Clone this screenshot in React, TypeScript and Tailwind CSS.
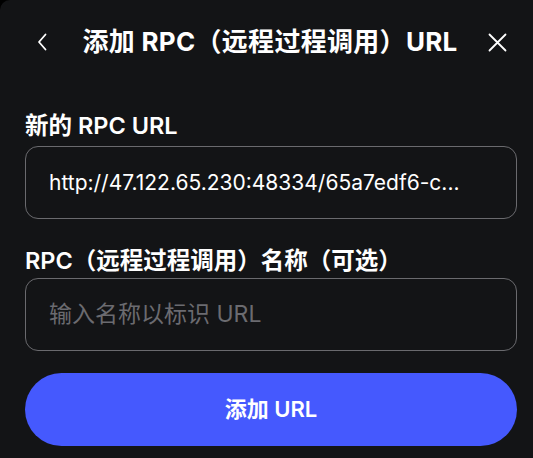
import React from 'react';

const font = { fontFamily: 'Inter, "Noto Sans CJK SC", sans-serif' };

export default function App() {
  return (
    <div className="w-[533px] h-[458px] bg-black overflow-hidden" style={font}>
      <div className="h-full bg-[#131416] rounded-tl-[10px] pl-[25px] pr-[16px] flex flex-col">
        <div className="h-[84px] flex items-center justify-between">
          <button className="w-[30px] h-[30px] flex items-center justify-center ml-[2px]">
            <svg width="12" height="18" viewBox="0 0 12 18" fill="none">
              <path d="M9.5 1.5 L3 9 L9.5 16.5" stroke="white" strokeWidth="1.8" strokeLinecap="round" strokeLinejoin="round" />
            </svg>
          </button>
          <h1 className="text-white text-[26px] font-bold leading-[32px] tracking-[0.3px]">添加 RPC（远程过程调用）URL</h1>
          <button className="w-[30px] h-[30px] flex items-center justify-center mr-[4px]">
            <svg width="19" height="19" viewBox="0 0 19 19" fill="none">
              <path d="M1.5 1.5 L17.5 17.5 M17.5 1.5 L1.5 17.5" stroke="white" strokeWidth="1.8" strokeLinecap="round" />
            </svg>
          </button>
        </div>

        <label className="mt-[27px] text-white text-[23.5px] font-semibold leading-[30px]">新的 RPC URL</label>
        <div className="mt-[5px] h-[73px] border border-[#6a6a6e] rounded-[13px] flex items-center px-[23px]">
          <span className="text-white text-[21px] truncate">http://47.122.65.230:48334/65a7edf6-c...</span>
        </div>

        <label className="mt-[27px] text-white text-[23.5px] font-semibold leading-[30px]">RPC（远程过程调用）名称（可选）</label>
        <div className="mt-[2px] h-[73px] border border-[#6a6a6e] rounded-[13px] flex items-center px-[23px]">
          <span className="text-[#6b6b70] text-[23px]">输入名称以标识 URL</span>
        </div>

        <button className="mt-[22px] h-[73px] rounded-full bg-[#4559fe] text-white text-[22px] font-semibold">
          添加 URL
        </button>
      </div>
    </div>
  );
}
